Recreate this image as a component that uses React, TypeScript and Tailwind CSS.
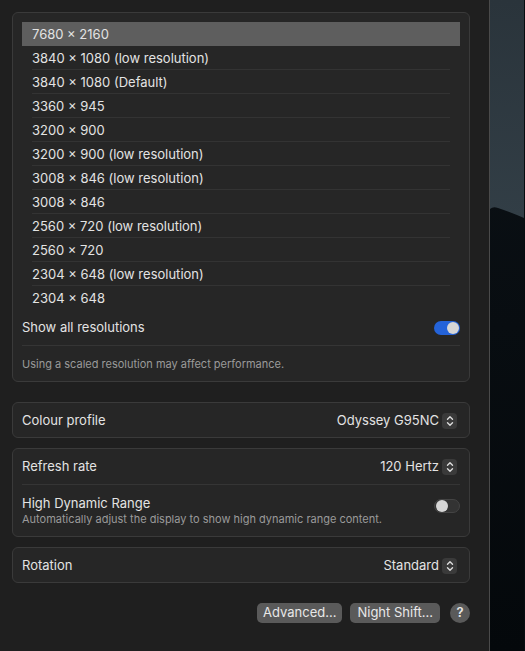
import React from "react";

const resolutions = [
  "7680 × 2160",
  "3840 × 1080 (low resolution)",
  "3840 × 1080 (Default)",
  "3360 × 945",
  "3200 × 900",
  "3200 × 900 (low resolution)",
  "3008 × 846 (low resolution)",
  "3008 × 846",
  "2560 × 720 (low resolution)",
  "2560 × 720",
  "2304 × 648 (low resolution)",
  "2304 × 648",
];

function Stepper() {
  return (
    <span className="ml-[3px] flex h-[16px] w-[15px] items-center justify-center rounded-[4px] bg-[#3a3a3a]">
      <svg width="8" height="12" viewBox="0 0 8 12" fill="none" stroke="#dcdcdc" strokeWidth="1.4" strokeLinecap="round" strokeLinejoin="round">
        <path d="M1.5 4.2 4 1.7 6.5 4.2" />
        <path d="M1.5 7.8 4 10.3 6.5 7.8" />
      </svg>
    </span>
  );
}

function Toggle({ on }: { on: boolean }) {
  return (
    <span
      className={`flex h-[14px] w-[26px] items-center rounded-full px-[1px] ${
        on ? "justify-end bg-[#2463d9]" : "justify-start border border-[#444] bg-[#333333]"
      }`}
    >
      <span className="h-[12px] w-[12px] rounded-full bg-[#d6d6d6]" />
    </span>
  );
}

function PopupRow({ label, value, tall }: { label: string; value: string; tall?: boolean }) {
  return (
    <div
      className={`flex items-center justify-between pl-[9px] pr-[12px] pt-[1px] ${
        tall ? "h-[35px]" : "h-[34px]"
      }`}
    >
      <span>{label}</span>
      <span className="flex items-center">
        {value}
        <Stepper />
      </span>
    </div>
  );
}

export default function App() {
  return (
    <div
      className="flex h-[651px] w-[525px] overflow-hidden bg-[#1f1f1f] text-[13px] text-[#e3e3e3]"
      style={{ fontFamily: "Inter, 'Noto Sans', sans-serif" }}
    >
      <div className="flex w-[490px] shrink-0 flex-col border-r border-[#4a4a4a] pl-[12px] pr-[19px] pt-[12px]">
        <section className="rounded-[6px] border border-[#3a3a3a] bg-[#262626] px-[9px] pt-[9px]">
          <ul>
            {resolutions.map((r, i) => (
              <li
                key={r}
                className={
                  i === 0
                    ? "flex h-[24px] items-center bg-[#5e5e5e] px-[10px] pt-[1px]"
                    : "flex h-[24px] items-center px-[10px]"
                }
              >
                <span
                  className={
                    i > 0 && i < resolutions.length - 1
                      ? "flex h-full w-full items-center border-b border-[#333333] pt-[2px]"
                      : "flex h-full w-full items-center pt-[1px]"
                  }
                >
                  {r}
                </span>
              </li>
            ))}
          </ul>
          <div className="flex h-[36px] items-center justify-between border-b border-[#353535] pt-[1px]">
            <span>Show all resolutions</span>
            <Toggle on />
          </div>
          <p className="flex h-[35px] items-center pt-[1px] text-[11px] text-[#9a9a9a]">
            Using a scaled resolution may affect performance.
          </p>
        </section>

        <section className="mt-[20px] rounded-[6px] border border-[#3a3a3a] bg-[#262626]">
          <PopupRow label="Colour profile" value="Odyssey G95NC" />
        </section>

        <section className="mt-[10px] rounded-[6px] border border-[#3a3a3a] bg-[#262626]">
          <PopupRow label="Refresh rate" value="120 Hertz" tall />
          <div className="mx-[9px] border-t border-[#353535]" />
          <div className="flex h-[51px] items-center justify-between pl-[9px] pr-[9px]">
            <div className="flex flex-col">
              <span className="leading-[17px]">High Dynamic Range</span>
              <span className="text-[11px] leading-[14px] text-[#9a9a9a]">
                Automatically adjust the display to show high dynamic range content.
              </span>
            </div>
            <span className="-mt-[9px]">
              <Toggle on={false} />
            </span>
          </div>
        </section>

        <section className="mt-[10px] rounded-[6px] border border-[#3a3a3a] bg-[#262626]">
          <PopupRow label="Rotation" value="Standard" />
        </section>

        <div className="mt-[20px] flex items-center justify-end gap-[8px]">
          <button className="h-[20px] rounded-[5px] bg-[#5a5a5a] px-[6px] text-[13px] text-[#e8e8e8]">
            Advanced...
          </button>
          <button className="h-[20px] rounded-[5px] bg-[#5a5a5a] px-[7px] text-[13px] text-[#e8e8e8]">
            Night Shift...
          </button>
          <span className="ml-[2px] flex h-[20px] w-[20px] items-center justify-center rounded-full bg-[#5a5a5a] text-[13px] font-semibold text-[#e8e8e8]">
            ?
          </span>
        </div>
      </div>
      <div className="flex-1 bg-[#070c10]">
        <svg width="34" height="651" viewBox="0 0 34 651" preserveAspectRatio="none">
          <defs>
            <linearGradient id="sky" x1="0" y1="0" x2="0" y2="1">
              <stop offset="0" stopColor="#2a343b" />
              <stop offset="1" stopColor="#323e46" />
            </linearGradient>
            <linearGradient id="ground" x1="0" y1="0" x2="0" y2="1">
              <stop offset="0" stopColor="#0c1217" />
              <stop offset="1" stopColor="#04080b" />
            </linearGradient>
          </defs>
          <rect x="0" y="0" width="34" height="651" fill="url(#ground)" />
          <path d="M0 0 H34 V218 Q20 212 8 208 Q3 206 0 209 Z" fill="url(#sky)" />
        </svg>
      </div>
    </div>
  );
}
